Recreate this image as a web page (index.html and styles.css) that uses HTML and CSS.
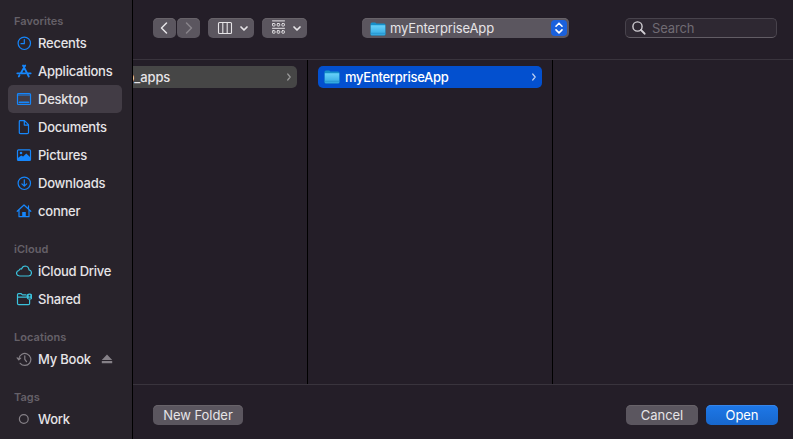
FILE: index.html
```html
<!DOCTYPE html>
<html lang="en">
<head>
<meta charset="utf-8">
<title>Open</title>
<link rel="stylesheet" href="styles.css">
</head>
<body>
<svg class="defs" width="0" height="0" aria-hidden="true">
  <defs>
    <linearGradient id="folderFill" x1="0" y1="0" x2="0" y2="1">
      <stop offset="0" stop-color="#68d2fa"/><stop offset="1" stop-color="#2fa6e0"/>
    </linearGradient>
    <symbol id="folder" viewBox="0 0 16 16">
      <path d="M.5 3Q.5 1.500 2 1.500h3.200l1.300 1H14q1.500 0 1.500 1.500v9.500q0 1-1 1h-13q-1 0-1-1z" fill="#168fc9"/>
      <path d="M.8 4.300h14.400v8.900q0 1-1 1H1.800q-1 0-1-1z" fill="url(#folderFill)"/>
      <path d="M1 12.300h14" stroke="#238fc8" stroke-width=".7"/>
    </symbol>
  </defs>
</svg>
<div class="dialog">
  <nav class="sidebar">
    <section>
      <h2>Favorites</h2>
      <a class="item"><svg viewBox="0 0 16 16"><circle cx="8.300" cy="8.300" r="6.200"/><path d="M8.300 4.500V8.700H5"/></svg><span>Recents</span></a>
      <a class="item"><svg viewBox="0 0 16 16"><g stroke-width="1.800"><path d="M7 2.500l5.800 11M9.200 2.500L4.800 10.300M3.500 12.300l-.7 1.200M1.300 10.300h8M11.600 10.300h3.100"/></g></svg><span>Applications</span></a>
      <a class="item selected"><svg viewBox="0 0 16 16"><rect x="1.500" y="2.500" width="13" height="11" rx="1"/><path d="M1.500 4h13"/><path d="M3.500 11.300h9" stroke-width="1.800"/></svg><span>Desktop</span></a>
      <a class="item"><svg viewBox="0 0 16 16"><path d="M4 1.700h4.500l4 4V13.400q0 1.200-1.200 1.200H4.500Q3.300 14.600 3.300 13.400V2.500q0-.8.7-.8zM8.300 1.900v4.200h4.100"/></svg><span>Documents</span></a>
      <a class="item"><svg viewBox="0 0 16 16"><rect x="1.500" y="2.800" width="13" height="10.700" rx="1"/><circle cx="5" cy="6" r="1.300" fill="currentColor" stroke="none"/><path d="M1.500 11.300l3.700-2.900 1.900 1.100 3.200-3 4.200 4v2.500h-13z" fill="currentColor" stroke="none"/></svg><span>Pictures</span></a>
      <a class="item"><svg viewBox="0 0 16 16"><circle cx="8.300" cy="8.300" r="6.200"/><path d="M8.300 4.800v6.200M5.900 8.800l2.400 2.400 2.400-2.400"/></svg><span>Downloads</span></a>
      <a class="item"><svg viewBox="0 0 16 16"><path d="M1.200 8.300L8 2l6.800 6.300M3 7v6.700h10V7M12.500 5.500V2.900"/><path d="M6.200 14V9h3.600v5z" fill="currentColor" stroke="none"/></svg><span>conner</span></a>
    </section>
    <section class="cyan">
      <h2>iCloud</h2>
      <a class="item"><svg viewBox="0 0 16 16"><path d="M3.700 13Q.5 12.700.5 10.200.6 7.900 3 7.500 3.200 6 4.600 5.800q.6 0 .9.200Q6.500 3 9.300 3q3.400.3 3.700 3.900 2.500.5 2.500 3.100-.2 2.800-2.900 3z"/></svg><span>iCloud Drive</span></a>
      <a class="item"><svg viewBox="0 0 16 16"><path d="M13.600 9v3.500q0 1.200-1.200 1.200H2.700q-1.200 0-1.200-1.200V3.800q0-1.100 1-1.100h2.700l1.300 1.200H10M1.500 6.200h8.700"/><circle cx="13.500" cy="5.600" r="3.100" fill="currentColor" stroke="none"/><circle cx="13.500" cy="4.700" r=".9" fill="#28232b" stroke="none"/><path d="M12 7.500q1.500-2 3 0z" fill="#28232b" stroke="none"/></svg><span>Shared</span></a>
    </section>
    <section class="gray">
      <h2>Locations</h2>
      <a class="item"><svg viewBox="0 0 16 16"><path d="M2.900 7.500A6 6 0 1 1 4.200 12.300M1.200 6.800l1.600 2 1.900-1.700M8.800 4.800V8.300l1.700 2.400"/></svg><span>My Book</span><svg class="eject" viewBox="0 0 12 12"><path d="M6 1.500L11.200 7H.8zM.8 8h10.400v2.300H.8z" fill="currentColor" stroke="none"/></svg></a>
    </section>
    <section class="gray">
      <h2>Tags</h2>
      <a class="item"><svg viewBox="0 0 16 16"><circle cx="7.800" cy="8" r="4.400"/></svg><span>Work</span></a>
    </section>
  </nav>
  <main class="main">
    <header class="toolbar">
      <div class="nav">
        <button class="control"><svg width="23" height="20" viewBox="0 0 23 20"><path d="M13.500 5L8.500 10l5 5"/></svg></button>
        <button class="control dim"><svg width="23" height="20" viewBox="0 0 23 20"><path d="M9.500 5l5 5-5 5"/></svg></button>
      </div>
      <button class="control view"><svg width="46" height="20" viewBox="0 0 46 20"><g stroke-width="1.100"><rect x="10.500" y="4.500" width="13" height="11" rx="1"/><path d="M14.800 4.500v11M19.200 4.500v11"/></g><path d="M33 9l3 3 3-3" stroke-width="1.700"/></svg></button>
      <button class="control group"><svg width="45" height="20" viewBox="0 0 45 20"><g stroke-width="1"><path d="M10.500 2.900h12M10.500 10.300h12"/><rect x="10.500" y="5.500" width="2.500" height="2.500" rx=".6"/><rect x="15.200" y="5.500" width="2.500" height="2.500" rx=".6"/><rect x="19.900" y="5.500" width="2.500" height="2.500" rx=".6"/><rect x="10.500" y="12.700" width="2.500" height="2.500" rx=".6"/><rect x="15.200" y="12.700" width="2.500" height="2.500" rx=".6"/><rect x="19.900" y="12.700" width="2.500" height="2.500" rx=".6"/></g><path d="M32 9l3 3 3-3" stroke-width="1.700"/></svg></button>
      <button class="control path"><svg class="folder"><use href="#folder"/></svg><span class="label">myEnterpriseApp</span><span class="stepper"><svg width="16" height="16" viewBox="0 0 16 16"><path d="M5 6.200l3-3 3 3M5 9.900l3 3 3-3" stroke-width="1.600"/></svg></span></button>
      <div class="search"><svg width="16" height="16" viewBox="0 0 16 16"><circle cx="6.500" cy="6.500" r="4.600"/><path d="M10 10l3.600 3.700" stroke-width="1.900"/></svg><span>Search</span></div>
    </header>
    <div class="columns">
      <div class="column first"><div class="row parent"><span>o_apps</span><svg class="chevron" viewBox="0 0 6 10"><path d="M1.700 2L4.200 5 1.700 8"/></svg></div></div>
      <div class="column second"><div class="row current"><svg class="folder"><use href="#folder"/></svg><span>myEnterpriseApp</span><svg class="chevron" viewBox="0 0 6 10"><path d="M1.700 2L4.200 5 1.700 8"/></svg></div></div>
      <div class="column"></div>
    </div>
    <footer class="footer">
      <button class="control new">New Folder</button>
      <button class="control cancel">Cancel</button>
      <button class="control open">Open</button>
    </footer>
  </main>
</div>
</body>
</html>
```
FILE: styles.css
```css
* { box-sizing: border-box; }
body {
  margin: 0;
  background: #241e28;
  color: #e6e4e7;
  font: 500 13px/16px Inter, "Liberation Sans", sans-serif;
  letter-spacing: -.23px;
  overflow: hidden;
}
.defs { display: block; }
.dialog { display: flex; width: 793px; height: 439px; }
svg { flex: none; fill: none; stroke: currentColor; stroke-width: 1.200; stroke-linecap: round; stroke-linejoin: round; }
svg.folder { width: 16px; height: 16px; stroke: none; }

.sidebar { width: 133px; padding: 13px 10px 0 8px; background: #28232b; border-right: 1px solid #000; }
.sidebar section { margin-bottom: 16px; }
.sidebar h2 { margin: 0; padding-left: 6px; height: 16px; font: 600 11px/16px Inter, sans-serif; letter-spacing: .05px; color: #656068; }
.item { display: flex; align-items: center; height: 28px; padding-left: 8px; border-radius: 5px; white-space: nowrap; }
.item span { margin-left: 6px; }
.item > svg { width: 16px; height: 16px; color: #1686fb; }
.cyan .item > svg { color: #3bc2dc; }
.gray .item > svg { color: #858087; }
.item > svg.eject { width: 12px; height: 12px; margin-left: 10px; }
.selected { background: #423c45; }

.main { flex: 1; min-width: 0; display: flex; flex-direction: column; }
.toolbar { display: flex; height: 60px; padding: 18px 16px 0 20px; border-bottom: 1px solid #39343d; }
.control {
  display: flex; align-items: center; justify-content: center;
  height: 20px; margin: 0; padding: 0; border: 0; border-radius: 5px;
  background: #5b565f; color: #e6e4e7; font: inherit; letter-spacing: inherit;
  box-shadow: inset 0 1px #686369;
}
.nav { display: flex; gap: 1px; margin-right: 8px; }
.nav .control { width: 23px; }
.nav svg { stroke-width: 1.500; }
.dim svg { color: #89848b; }
.view { width: 46px; margin-right: 8px; }
.group { width: 45px; margin-right: 55px; }
.path { width: 207px; justify-content: flex-start; padding: 0 2px 0 8px; font-weight: 400; letter-spacing: -.13px; }
.path .label { margin: 0 auto 1px 4px; }
.path svg.folder { margin-top: 1px; }
.stepper { display: flex; width: 16px; height: 16px; border-radius: 4px; background: #1b61dc; color: #fff; }
.search {
  display: flex; align-items: center; width: 152px; height: 20px; margin-left: auto;
  padding-left: 5px; border: 1px solid #48434c; border-bottom-color: #625d65; border-radius: 5px;
  background: #2e2832; color: #706b73; font-weight: 400; letter-spacing: -.15px;
}
.search svg { color: #d2cfd4; stroke-width: 1.400; margin-right: 5px; }

.columns { display: flex; height: 324px; }
.column { flex: 1; padding-top: 6px; border-right: 1px solid #000; }
.column:last-child { border-right: 0; }
.first { flex: 0 0 175px; padding-right: 10px; overflow: hidden; }
.second { flex: 0 0 245px; padding-left: 10px; padding-right: 10px; }
.row { display: flex; align-items: center; height: 22px; padding-right: 5px; border-radius: 5px; }
.row span { margin-bottom: 1px; }
.parent { background: #464646; border-radius: 0 5px 5px 0; letter-spacing: -.1px; }
.parent span { margin-left: -6.500px; }
.current { background: #0350cf; color: #fff; padding-left: 6px; letter-spacing: -.27px; }
.current span { margin-left: 5px; }
.chevron { width: 6px; height: 10px; margin-left: auto; color: #999; }
.current .chevron { color: #bdd0f2; }

.footer { flex: 1; display: flex; align-items: flex-start; padding: 20px 15px 0 20px; border-top: 1px solid #39343d; }
.footer .control { font-weight: 400; letter-spacing: -.05px; padding-bottom: 1px; }
.footer .new { width: 90px; margin-right: auto; }
.footer .cancel { width: 72px; }
.footer .open { width: 72px; margin-left: 8px; color: #fff; background: linear-gradient(#1e78e8, #1767cd); box-shadow: inset 0 1px #3685e9; }
```
